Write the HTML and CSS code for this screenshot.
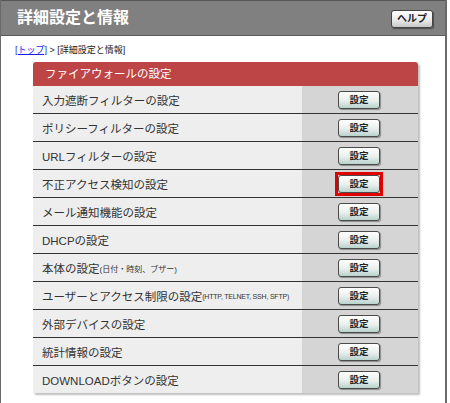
FILE: index.html
```html
<!DOCTYPE html>
<html lang="ja">
<head>
<meta charset="utf-8">
<link rel="stylesheet" href="styles.css">
</head>
<body>
<div class="frame">
  <div class="header">
    <h1 class="title">詳細設定と情報</h1>
    <button class="help">ヘルプ</button>
  </div>
  <div class="crumb"><a href="#">[トップ]</a> &gt; [詳細設定と情報]</div>
  <div class="panel">
    <div class="panel-head">ファイアウォールの設定</div>
    <div class="row"><div class="label">入力遮断フィルターの設定</div><div class="cell"><button class="btn">設定</button></div></div>
    <div class="row"><div class="label">ポリシーフィルターの設定</div><div class="cell"><button class="btn">設定</button></div></div>
    <div class="row"><div class="label">URLフィルターの設定</div><div class="cell"><button class="btn">設定</button></div></div>
    <div class="row"><div class="label">不正アクセス検知の設定</div><div class="cell"><span class="hlbox"><button class="btn">設定</button></span></div></div>
    <div class="row"><div class="label">メール通知機能の設定</div><div class="cell"><button class="btn">設定</button></div></div>
    <div class="row"><div class="label">DHCPの設定</div><div class="cell"><button class="btn">設定</button></div></div>
    <div class="row"><div class="label">本体の設定<span class="sm">(日付・時刻、ブザー)</span></div><div class="cell"><button class="btn">設定</button></div></div>
    <div class="row"><div class="label">ユーザーとアクセス制限の設定<span class="sm latin">(HTTP, TELNET, SSH, SFTP)</span></div><div class="cell"><button class="btn">設定</button></div></div>
    <div class="row"><div class="label">外部デバイスの設定</div><div class="cell"><button class="btn">設定</button></div></div>
    <div class="row"><div class="label">統計情報の設定</div><div class="cell"><button class="btn">設定</button></div></div>
    <div class="row"><div class="label">DOWNLOADボタンの設定</div><div class="cell"><button class="btn">設定</button></div></div>
  </div>
</div>
</body>
</html>
```

FILE: styles.css
```css
html, body {
  margin: 0;
  padding: 0;
  background: #fff;
}
body {
  font-family: "Liberation Sans", "Noto Sans CJK JP", sans-serif;
  color: #333;
}
.frame {
  width: 447px;
  height: 403px;
  box-sizing: border-box;
  border-left: 1px solid #6a6a6a;
  border-right: 2px solid #6a6a6a;
  overflow: hidden;
}
.header {
  height: 36px;
  box-sizing: border-box;
  background: #808080;
  border-top: 1px solid #555;
  border-bottom: 1px solid #5a5a5a;
  display: flex;
  align-items: center;
  justify-content: space-between;
  padding: 0 12px 0 16px;
}
.title {
  margin: 0;
  font-size: 16px;
  font-weight: bold;
  color: #fff;
  line-height: 20px;
}
.help {
  width: 42px;
  height: 18px;
  margin-top: 2px;
  padding: 0;
  border: 1px solid #444;
  border-radius: 3px;
  background: linear-gradient(#ffffff, #e8e8e8 60%, #c8c8c8);
  box-shadow: 1px 1px 1px rgba(0,0,0,0.4);
  font-family: inherit;
  font-size: 10px;
  font-weight: bold;
  color: #222;
  line-height: 16px;
}
.crumb {
  height: 26px;
  box-sizing: border-box;
  padding: 8px 0 0 14px;
  font-size: 9px;
  line-height: 12px;
  color: #222;
}
.crumb a {
  color: #1a1aee;
  text-decoration: underline;
}
.panel {
  margin-left: 32px;
  width: 385px;
  background: #eeeeee;
  border-radius: 3px 3px 0 0;
  box-shadow: 2px 2px 2px rgba(0,0,0,0.25);
}
.panel-head {
  height: 24px;
  background: #bd4545;
  border-radius: 3px 3px 0 0;
  color: #fff;
  font-size: 11.5px;
  line-height: 24px;
  padding-left: 12px;
}
.row {
  display: grid;
  grid-template-columns: 269px 116px;
  height: 28px;
  box-sizing: border-box;
  border-bottom: 1px solid #333;
}
.row:last-child {
  border-bottom: none;
  height: 27px;
}
.label {
  display: flex;
  align-items: center;
  padding-left: 9px;
  font-size: 11.5px;
  color: #333;
  white-space: nowrap;
  background: #eeeeee;
}
.sm {
  font-size: 8px;
  margin-top: 1px;
}
.sm.latin {
  font-size: 7px;
  letter-spacing: -0.2px;
}
.cell {
  background: #d5d5d5;
  display: flex;
  align-items: center;
  justify-content: center;
}
.btn {
  width: 42px;
  height: 18px;
  padding: 0;
  margin-right: 2px;
  border: 1px solid #4a4a4a;
  border-radius: 3px;
  background: linear-gradient(#ffffff, #e9efed 55%, #b9d2cc);
  box-shadow: 1px 1px 1px rgba(0,0,0,0.35);
  font-family: inherit;
  font-size: 9.5px;
  font-weight: bold;
  color: #222;
  line-height: 16px;
}
.hlbox {
  display: flex;
  border: 3px solid #e00000;
  margin-right: 2px;
}
.hlbox .btn {
  margin-right: 0;
  box-shadow: none;
}
```
